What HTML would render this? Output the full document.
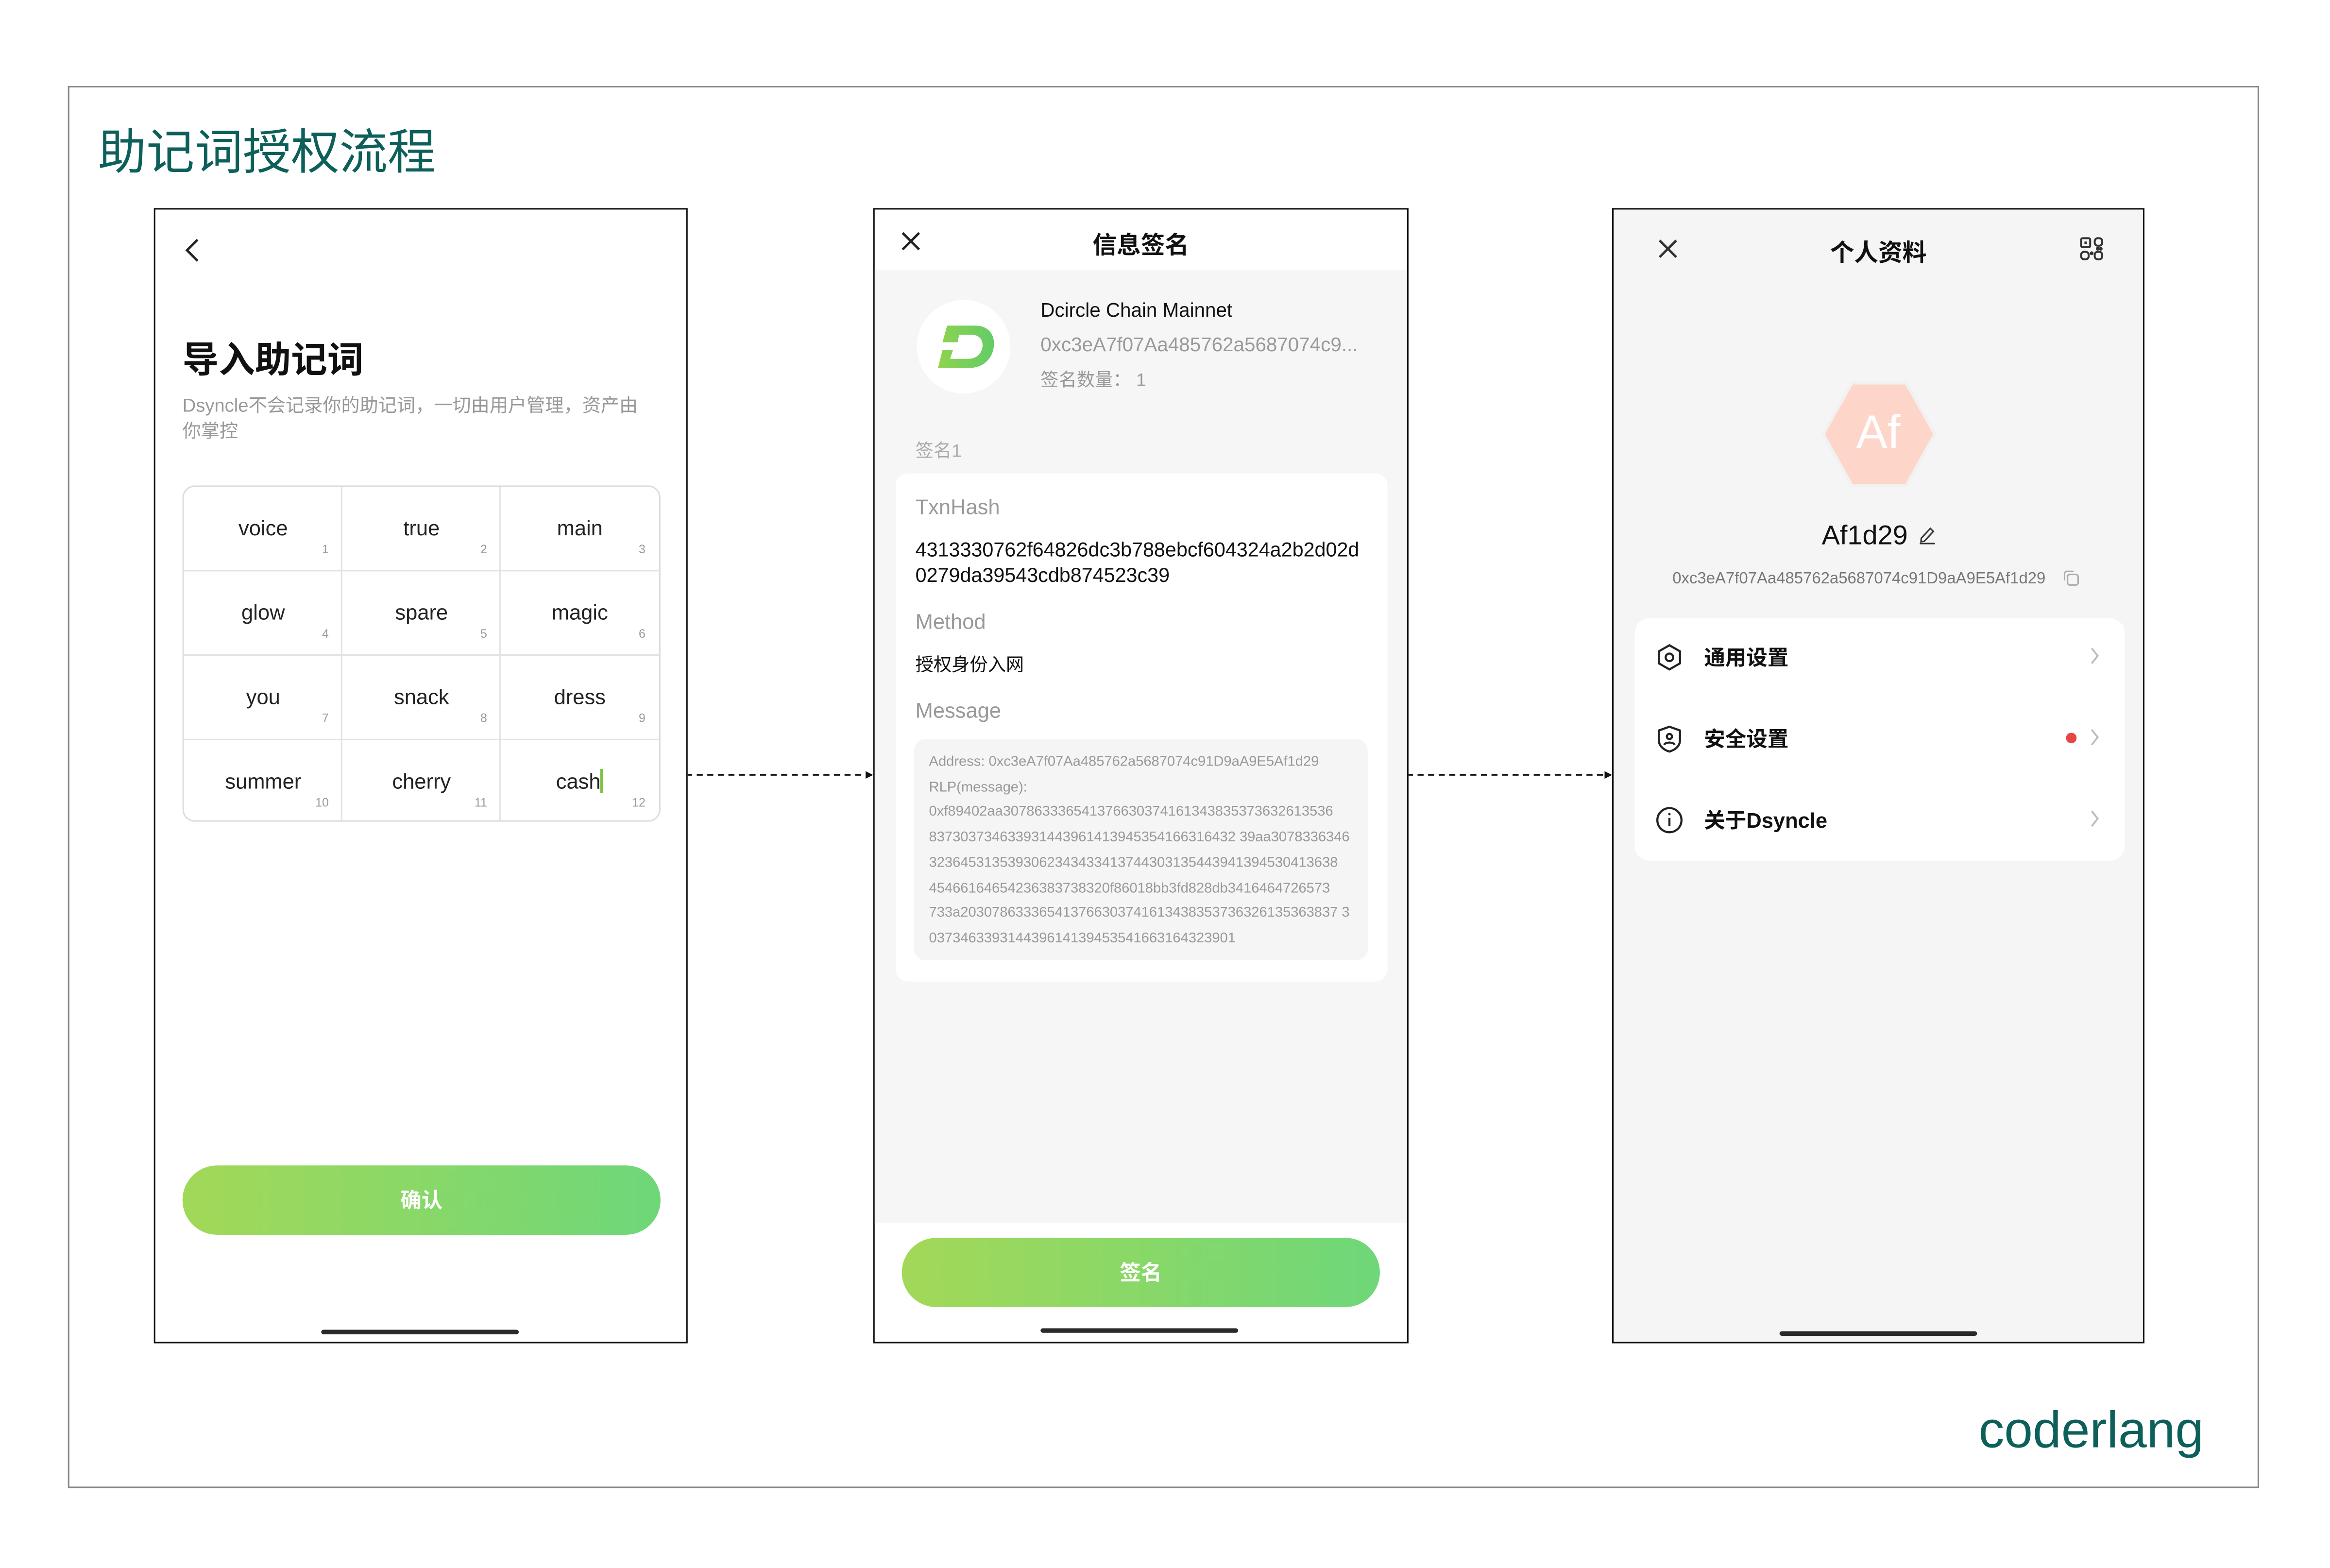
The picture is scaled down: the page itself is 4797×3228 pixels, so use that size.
<!DOCTYPE html>
<html><head><meta charset="utf-8"><style>
html,body{margin:0;padding:0;background:#fff;width:4797px;height:3228px;overflow:hidden}
#s{position:absolute;left:0;top:0;width:1545px;height:1040px;transform:scale(3.1048,3.1038);transform-origin:0 0;font-family:"Liberation Sans","Noto Sans CJK SC",sans-serif;color:#111}
.a{position:absolute}
.ph{position:absolute;border:1px solid #111;box-sizing:border-box;overflow:hidden}
.t{position:absolute;white-space:nowrap}
.cell{position:absolute;width:105px;height:56px;box-sizing:border-box}
.cell .w{position:absolute;left:0;right:0;top:19px;text-align:center;font-size:14px;color:#222}
.cell .n{position:absolute;right:9px;top:37px;font-size:8px;color:#999}
.btn{position:absolute;border-radius:24px;background:linear-gradient(90deg,#a3d858,#6ed779);color:#fff;font-weight:bold;font-size:14px;text-align:center}
.home{position:absolute;height:3px;width:131px;background:#2a2a2a;border-radius:2px}
.msg{font-size:9.4px;color:#999;line-height:16.7px}
</style></head><body><div id="s">
<div class="a" style="left:45px;top:57px;width:1453px;height:930px;border:1px solid #888;box-sizing:border-box"></div>
<div class="t" style="left:65px;top:76px;font-size:32px;color:#0d5f5a">助记词授权流程</div>
<div class="t" style="left:1312px;top:930px;font-size:34px;color:#0d5f5a">coderlang</div>

<svg class="a" style="left:455px;top:509px" width="620" height="10">
<line x1="0" y1="5" x2="120" y2="5" stroke="#111" stroke-width="1" stroke-dasharray="4,3"/>
<polygon points="119,2.5 124,5 119,7.5" fill="#111"/>
<line x1="478" y1="5" x2="609" y2="5" stroke="#111" stroke-width="1" stroke-dasharray="4,3"/>
<polygon points="609,2.5 614,5 609,7.5" fill="#111"/>
</svg>

<!-- phone 1 -->
<div class="ph" style="left:102px;top:138px;width:354px;height:753px;background:#fff">
<svg class="a" style="left:18px;top:18px" width="14" height="18"><polyline points="10,2 3,9 10,16" fill="none" stroke="#222" stroke-width="1.6"/></svg>
<div class="t" style="left:18px;top:80px;font-size:24px;font-weight:bold;color:#111">导入助记词</div>
<div class="t" style="left:18px;top:122px;font-size:12.3px;color:#999;line-height:17px">Dsyncle不会记录你的助记词，一切由用户管理，资产由<br>你掌控</div>
<div class="a" style="left:18px;top:183px;width:317px;height:223px;border:1px solid #ddd;border-radius:8px;box-sizing:border-box;overflow:hidden">
<div class="a" style="left:104px;top:0;width:1px;height:223px;background:#e2e2e2"></div>
<div class="a" style="left:209px;top:0;width:1px;height:223px;background:#e2e2e2"></div>
<div class="a" style="left:0;top:55px;width:317px;height:1px;background:#e2e2e2"></div>
<div class="a" style="left:0;top:111px;width:317px;height:1px;background:#e2e2e2"></div>
<div class="a" style="left:0;top:167px;width:317px;height:1px;background:#e2e2e2"></div>
<div class="cell" style="left:0;top:0"><div class="w">voice</div><div class="n">1</div></div>
<div class="cell" style="left:105px;top:0"><div class="w">true</div><div class="n">2</div></div>
<div class="cell" style="left:210px;top:0"><div class="w">main</div><div class="n">3</div></div>
<div class="cell" style="left:0;top:56px"><div class="w">glow</div><div class="n">4</div></div>
<div class="cell" style="left:105px;top:56px"><div class="w">spare</div><div class="n">5</div></div>
<div class="cell" style="left:210px;top:56px"><div class="w">magic</div><div class="n">6</div></div>
<div class="cell" style="left:0;top:112px"><div class="w">you</div><div class="n">7</div></div>
<div class="cell" style="left:105px;top:112px"><div class="w">snack</div><div class="n">8</div></div>
<div class="cell" style="left:210px;top:112px"><div class="w">dress</div><div class="n">9</div></div>
<div class="cell" style="left:0;top:168px"><div class="w">summer</div><div class="n">10</div></div>
<div class="cell" style="left:105px;top:168px"><div class="w">cherry</div><div class="n">11</div></div>
<div class="cell" style="left:210px;top:168px"><div class="w">cash<span style="display:inline-block;width:2px;height:16px;background:#7bc142;vertical-align:-3px"></span></div><div class="n">12</div></div>
</div>
<div class="btn" style="left:18px;top:634px;width:317px;height:46px;line-height:46px">确认</div>
<div class="home" style="left:110px;top:743px"></div>
</div>

<!-- phone 2 -->
<div class="ph" style="left:579px;top:138px;width:355px;height:753px;background:#fff">
<svg class="a" style="left:17px;top:14px" width="14" height="14"><path d="M1.5 1.5L12.5 12.5M12.5 1.5L1.5 12.5" stroke="#222" stroke-width="1.6"/></svg>
<div class="t" style="left:0;right:0;top:10px;text-align:center;font-size:16px;font-weight:bold">信息签名</div>
<div class="a" style="left:0;top:40px;width:355px;height:632px;background:#f6f6f6"></div>
<div class="a" style="left:28px;top:60px;width:62px;height:62px;border-radius:50%;background:#fff"></div>
<svg class="a" style="left:28px;top:60px" width="62" height="62"><defs><linearGradient id="g" x1="0" x2="1"><stop offset="0" stop-color="#8fd34f"/><stop offset="1" stop-color="#63cc67"/></linearGradient></defs>
<path fill="url(#g)" fill-rule="evenodd" d="M20 17H39C48 17 52 24 51 31C50 39 44 45 35 45H14L17 33H24L22 39H34C40 39 43 35 43.5 31C44 26 41 23 36 23H28L27 28H17Z"/></svg>
<div class="t" style="left:110px;top:59px;font-size:13px;color:#111">Dcircle Chain Mainnet</div>
<div class="t" style="left:110px;top:82px;font-size:13px;color:#999">0xc3eA7f07Aa485762a5687074c9...</div>
<div class="t" style="left:110px;top:104px;font-size:12px;color:#999">签名数量： 1</div>
<div class="t" style="left:27px;top:151px;font-size:12px;color:#aaa">签名1</div>
<div class="a" style="left:14px;top:175px;width:326px;height:337px;background:#fff;border-radius:8px"></div>
<div class="t" style="left:27px;top:189px;font-size:14px;color:#999">TxnHash</div>
<div class="t" style="left:27px;top:217px;font-size:13.3px;color:#111;line-height:17px">4313330762f64826dc3b788ebcf604324a2b2d02d<br>0279da39543cdb874523c39</div>
<div class="t" style="left:27px;top:265px;font-size:14px;color:#999">Method</div>
<div class="t" style="left:27px;top:293px;font-size:12px;color:#111">授权身份入网</div>
<div class="t" style="left:27px;top:324px;font-size:14px;color:#999">Message</div>
<div class="a" style="left:26px;top:351px;width:301px;height:147px;background:#f5f5f5;border-radius:8px"></div>
<div class="t msg" style="left:36px;top:358px">Address: 0xc3eA7f07Aa485762a5687074c91D9aA9E5Af1d29<br>RLP(message):<br>0xf89402aa307863336541376630374161343835373632613536<br>837303734633931443961413945354166316432 39aa3078336346<br>3236453135393062343433413744303135443941394530413638<br>45466164654236383738320f86018bb3fd828db3416464726573<br>733a203078633365413766303741613438353736326135363837 3<br>037346339314439614139453541663164323901</div>
<div class="btn" style="left:18px;top:682px;width:317px;height:46px;line-height:46px">签名</div>
<div class="home" style="left:110px;top:742px"></div>
</div>

<!-- phone 3 -->
<div class="ph" style="left:1069px;top:138px;width:353px;height:753px;background:#f5f5f5">
<svg class="a" style="left:29px;top:19px" width="14" height="14"><path d="M1.5 1.5L12.5 12.5M12.5 1.5L1.5 12.5" stroke="#333" stroke-width="1.6"/></svg>
<div class="t" style="left:0;right:0;top:15px;text-align:center;font-size:16px;font-weight:bold;color:#111">个人资料</div>
<svg class="a" style="left:309px;top:18px" width="16" height="16" fill="none" stroke="#333" stroke-width="1.3"><rect x="1" y="1" width="6" height="6" rx="1"/><rect x="3.2" y="3.2" width="1.6" height="1.6" fill="#333" stroke="none"/><rect x="10" y="1" width="5" height="5" rx="2"/><rect x="1" y="10" width="5" height="5" rx="2"/><rect x="10" y="10" width="5" height="5" rx="2"/><circle cx="8" cy="11" r=".6" fill="#333"/><circle cx="12" cy="8" r=".6" fill="#333"/><circle cx="14" cy="8" r=".6" fill="#333"/></svg>
<svg class="a" style="left:136px;top:112px" width="80" height="74"><polygon points="22,3 58,3 77,37 58,71 22,71 3,37" fill="#fdd6c9" stroke="#f1f1f1" stroke-width="2"/></svg>
<div class="t" style="left:0;right:0;top:130px;text-align:center;font-size:31px;color:#fff">Af</div>
<div class="t" style="left:138px;top:206px;font-size:18px;color:#111">Af1d29</div>
<svg class="a" style="left:202px;top:209px" width="12" height="13" fill="none" stroke="#333" stroke-width="1"><path d="M2 9L8 2.5L10 4.5L4 11L1.8 11.3Z"/><line x1="1" y1="12.5" x2="11" y2="12.5"/></svg>
<div class="t" style="left:39px;top:239px;font-size:10.6px;color:#777">0xc3eA7f07Aa485762a5687074c91D9aA9E5Af1d29</div>
<svg class="a" style="left:298px;top:239px" width="11" height="11" fill="none" stroke="#aaa" stroke-width="1"><rect x="3" y="3" width="7" height="7" rx="1.5"/><path d="M1 7V2.5A1.5 1.5 0 0 1 2.5 1H7"/></svg>
<div class="a" style="left:14px;top:271px;width:325px;height:161px;background:#fff;border-radius:10px"></div>
<svg class="a" style="left:27px;top:287px" width="20" height="20" fill="none" stroke="#222" stroke-width="1.4"><polygon points="10,2 17,6 17,14 10,18 3,14 3,6"/><circle cx="10" cy="10" r="2.5"/></svg>
<div class="t" style="left:60px;top:287px;font-size:14px;font-weight:bold">通用设置</div>
<svg class="a" style="left:27px;top:341px" width="20" height="20" fill="none" stroke="#222" stroke-width="1.4"><path d="M10 2L17 4.5V11C17 15 13.5 17.5 10 18.5C6.5 17.5 3 15 3 11V4.5Z"/><circle cx="10" cy="8.5" r="1.7"/><path d="M6.5 14C7.5 12 12.5 12 13.5 14"/></svg>
<div class="t" style="left:60px;top:341px;font-size:14px;font-weight:bold">安全设置</div>
<svg class="a" style="left:27px;top:395px" width="20" height="20" fill="none" stroke="#222" stroke-width="1.4"><circle cx="10" cy="10" r="8"/><line x1="10" y1="8.5" x2="10" y2="14"/><circle cx="10" cy="6" r=".8" fill="#222" stroke="none"/></svg>
<div class="t" style="left:60px;top:395px;font-size:14px;font-weight:bold">关于Dsyncle</div>
<div class="a" style="left:300px;top:347px;width:7px;height:7px;border-radius:50%;background:#e84545"></div>
<svg class="a" style="left:315px;top:290px" width="8" height="122" fill="none" stroke="#bbb" stroke-width="1.2"><polyline points="2,1 6,6 2,11"/><polyline points="2,55 6,60 2,65"/><polyline points="2,109 6,114 2,119"/></svg>
<div class="home" style="left:110px;top:744px"></div>
</div>
</div></body></html>
